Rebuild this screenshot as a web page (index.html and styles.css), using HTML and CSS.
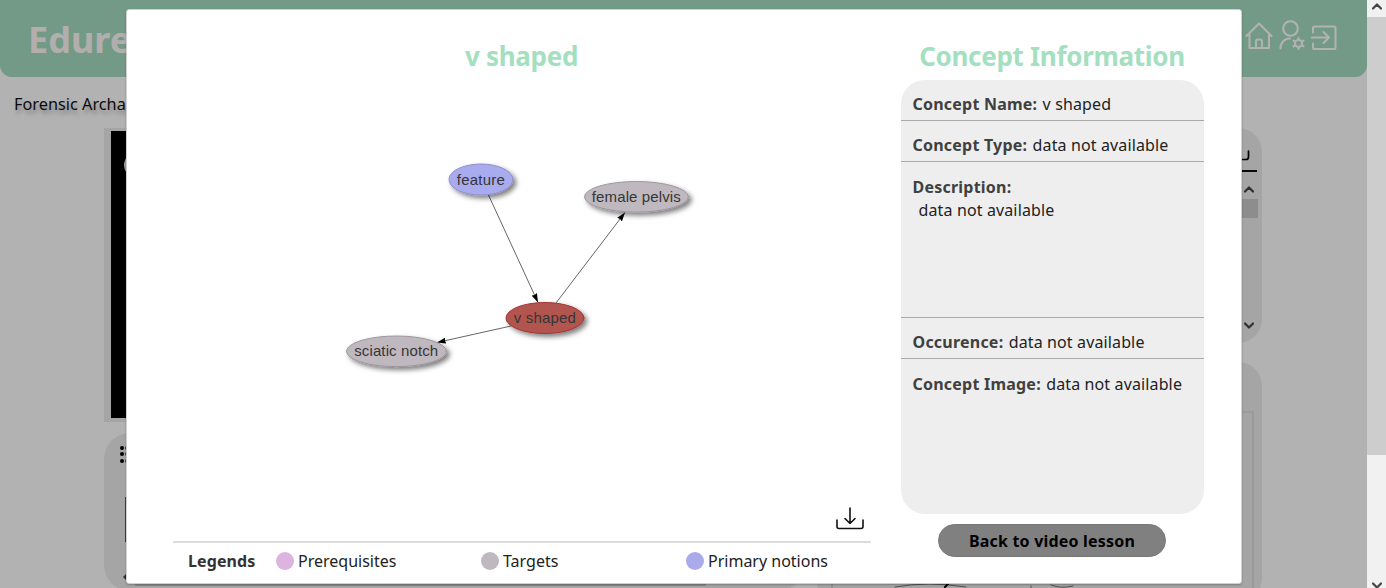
FILE: index.html
```html
<!DOCTYPE html>
<html lang="en">
<head>
<meta charset="utf-8">
<title>Edurell</title>
<link rel="stylesheet" href="styles.css">
</head>
<body>
<div class="screen">
  <div class="page">
    <header class="topbar">
      <div class="brand">Edure</div>
      <nav class="nav-icons">
        <svg width="28" height="32" viewBox="0 0 28 32"><path d="M1.500 17 14 4.500l12.500 12.500M4.500 15.500v13.500h19.500V15.500M11 29v-6.500a2 2 0 0 1 2-2h2a2 2 0 0 1 2 2v6.500"/></svg>
        <svg width="26" height="32" viewBox="0 0 26 32"><circle cx="11.500" cy="9.500" r="7.300"/><path d="M1.500 29.500c0-6 4-10 9.500-10"/><circle cx="19.500" cy="24.500" r="3.500"/><path d="M19.500 20.500v-1.500M19.500 28.500v1.500M16 22.500l-1.500-.8M23 22.500l1.500-.8M16 26.500l-1.500.8M23 26.500l1.500.8"/></svg>
        <svg width="26" height="32" viewBox="0 0 26 32"><path d="M2 13.500V9q0-1.500 1.500-1.500h19.500q1.500 0 1.500 1.500v19.500q0 1.500-1.500 1.500H3.500Q2 30 2 28.500V24.500M1 18.500h17M12.500 13l5.500 5.500-5.500 5.500"/></svg>
      </nav>
    </header>
    <div class="lesson">Forensic Archa</div>
    <main class="columns">
      <div class="col-left">
        <div class="video"><div class="player"><span class="knob"></span></div></div>
        <div class="card fragments">
          <div class="dots"><i></i><i></i><i></i></div>
          <div class="thumb"></div>
          <div class="track"><b></b><span class="rail"></span></div>
        </div>
      </div>
      <div class="col-right">
        <div class="card transcript">
          <svg class="dl" width="16" height="14" viewBox="0 0 16 14"><path d="M1 9.500h11q2.500 0 2.500-2.500V1"/></svg>
          <div class="rule"></div>
          <div class="scroller">
            <svg width="10" height="8" viewBox="0 0 10 8"><path d="M1 6.500 5 2.500l4 4"/></svg>
            <span class="grip"></span>
            <svg class="down" width="10" height="8" viewBox="0 0 10 8"><path d="M1 1.500l4 4 4-4"/></svg>
          </div>
        </div>
        <div class="card mapcard"><div class="map">
          <svg width="420" height="176" viewBox="0 0 420 176"><path d="M62 174Q95 168 133 174M198 173V176M218 172q10 4 22 1"/><path class="speck" d="M112 174l3-3"/></svg>
        </div></div>
      </div>
    </main>
  </div>
  <aside class="scrollbar">
    <div class="sb-btn"><svg width="10" height="8" viewBox="0 0 10 8"><path d="M1 6.500 5 2.500l4 4"/></svg></div>
    <div class="sb-thumb"></div>
    <div class="sb-end"><svg width="10" height="8" viewBox="0 0 10 8"><path d="M1 1.500l4 4 4-4"/></svg></div>
  </aside>
  <div class="overlay">
    <section class="modal">
      <div class="graph-side">
        <h1 class="title">v shaped</h1>
        <svg class="graph" width="697" height="420" viewBox="173 80 697 420">
          <defs>
            <filter id="shadow" x="-20%" y="-30%" width="150%" height="180%"><feDropShadow dx="3" dy="3" stdDeviation="2.800" flood-color="#000" flood-opacity=".5"/></filter>
            <marker id="arrow" viewBox="0 0 9 6" refX="9" refY="3" markerWidth="9" markerHeight="6" markerUnits="userSpaceOnUse" orient="auto"><path d="M0 0 9 3 0 6 .800 3z"/></marker>
          </defs>
          <g class="edges">
            <path d="M488 194 538 302.500"/><path d="M556 303 625 212.500"/><path d="M511 326 437 342.500"/>
          </g>
          <g class="nodes">
            <ellipse class="primary" cx="481" cy="179.500" rx="32" ry="15.500"/>
            <ellipse class="target" cx="636.500" cy="196.800" rx="52" ry="15.300"/>
            <ellipse class="main" cx="545" cy="318" rx="39" ry="15.500"/>
            <ellipse class="target" cx="396.500" cy="351.300" rx="50" ry="15.300"/>
          </g>
          <g class="labels">
            <text x="480.800" y="184.500" textLength="48">feature</text>
            <text x="636.300" y="202" textLength="89">female pelvis</text>
            <text x="544.800" y="323" textLength="62">v shaped</text>
            <text x="396.200" y="356.300" textLength="84">sciatic notch</text>
          </g>
        </svg>
        <div class="tools"><svg width="28" height="24" viewBox="0 0 28 24"><path d="M1 13v6.500q0 2 2 2h22q2 0 2-2V13M14 1v15.500M9 11.500l5 5 5-5"/></svg></div>
        <div class="legend">
          <strong>Legends</strong>
          <span class="item"><i class="dot pre"></i>Prerequisites</span>
          <span class="item"><i class="dot tar"></i>Targets</span>
          <span class="item"><i class="dot pri"></i>Primary notions</span>
        </div>
      </div>
      <div class="info-side">
        <h1 class="title info-title">Concept Information</h1>
        <div class="info">
          <div class="row name"><b>Concept Name:</b> <span>v shaped</span></div>
          <div class="row type"><b>Concept Type:</b> <span>data not available</span></div>
          <div class="row desc"><b>Description:</b><p>data not available</p></div>
          <div class="row occ"><b>Occurence:</b> <span>data not available</span></div>
          <div class="row img"><b>Concept Image:</b> <span>data not available</span></div>
        </div>
        <button class="back">Back to video lesson</button>
      </div>
    </section>
  </div>
</div>
</body>
</html>
```

FILE: styles.css
```css
* { box-sizing: border-box; }
body { margin: 0; font-family: "Noto Sans", "Open Sans", sans-serif; color: #222; overflow: hidden; }
svg { display: block; fill: none; stroke-linecap: round; stroke-linejoin: round; }
.screen { position: relative; display: flex; width: 1386px; height: 588px; overflow: hidden; background: #fff; }
.page { width: 1367px; height: 588px; overflow: hidden; }
.topbar { height: 77px; padding: 0 30px 0 28px; display: flex; justify-content: space-between; background: #a4ddc1; border-radius: 0 0 12px 12px; }
.brand { font-size: 36px; line-height: 80px; font-weight: 700; color: #fffafa; }
.nav-icons { display: flex; gap: 6px; padding-top: 19px; stroke: #fff; stroke-width: 2.1; }
.lesson { height: 51px; padding: 15px 0 0 14px; font-size: 16.3px; line-height: 24px; color: #111; text-shadow: 2px 4px 4px rgba(0,0,0,.3); white-space: nowrap; }
.columns { display: flex; justify-content: space-between; width: 1158px; margin-left: 104px; }
.col-left { width: 700px; }
.col-right { width: 446px; }
.video { height: 294px; padding: 3px 7px; background: #ececec; }
.player { height: 287px; background: #000; padding: 22px 0 0 13px; }
.knob { display: block; width: 24px; height: 24px; border-radius: 50%; background: #ddd; }
.card { background: #ececec; }
.fragments { height: 158px; margin-top: 11px; border-radius: 26px; padding: 13px 16px 0; }
.dots { display: grid; gap: 2.400px; width: 12px; }
.dots i { display: block; width: 4px; height: 4px; border-radius: 50%; background: #000; box-shadow: 5px 0 #555; }
.thumb { margin: 34px 0 0 5px; width: 100px; height: 45px; border-left: 2px solid #555; }
.track { display: flex; align-items: center; gap: 8px; margin-top: 27px; padding-left: 3px; }
.track b { border: 4px solid transparent; border-right-color: #444; border-left: 0; }
.rail { width: 571px; height: 17px; background: #c5c5c5; }
.transcript { height: 215px; border-radius: 24px; padding-top: 22px; display: flex; flex-direction: column; align-items: flex-end; }
.dl { stroke: #000; stroke-width: 1.7; margin-right: 12px; }
.rule { width: 430px; height: 2px; margin: 6px 5px 0 0; background: #111; }
.scroller { display: flex; flex-direction: column; align-items: flex-end; padding: 13px 4px 0 0; stroke: #444; stroke-width: 2.2; height: 158px; }
.scroller svg { margin-right: 4px; }
.grip { width: 18px; height: 19px; margin-top: 6px; background: #cbcbcb; }
.down { margin-top: 104px; }
.mapcard { height: 240px; margin-top: 19px; border-radius: 24px; padding: 49px 8px 0 15px; }
.map { height: 200px; border: 2px solid #dedede; border-left-color: #d5d5d5; }
.map svg { stroke: #777; }
.map .speck { stroke: #000; stroke-width: 2; }
.scrollbar { width: 19px; background: #cdcdcd; display: flex; flex-direction: column; }
.scrollbar svg { stroke: #444; stroke-width: 2.2; margin: 0 auto; }
.sb-btn { height: 17px; padding-top: 2px; background: #f1f1f1; }
.sb-thumb { height: 438px; }
.sb-end { height: 133px; padding-top: 127px; background: #f1f1f1; }
.overlay { position: absolute; top: 0; left: 0; width: 1367px; height: 588px; background: rgba(0,0,0,.3); padding: 9px 0 0 126px; }
.modal { width: 1116px; height: 575px; border-radius: 3px; background: #fff; border: 1px solid #d0d0d0; box-shadow: 0 1px 2px rgba(0,0,0,.25); display: flex; padding-left: 46px; }
.graph-side { width: 698px; }
.title { margin: 0; height: 70px; padding: 27px 1px 0 0; text-align: center; font-size: 26px; line-height: 38px; font-weight: 700; letter-spacing: -.3px; color: #a3dfc0; white-space: nowrap; }
.edges { stroke: #666; stroke-width: 1; }
.edges path { marker-end: url(#arrow); }
marker path { fill: #000; stroke: none; }
.nodes { filter: url(#shadow); }
.primary { fill: #a9abef; stroke: #8d8fcb; }
.target { fill: #bfb8bf; stroke: #9d969d; }
.main { fill: #b25450; stroke: #a33431; }
.labels { font: 15px "Liberation Sans", Arial, sans-serif; fill: #363636; text-anchor: middle; }
.tools { height: 41px; padding: 7px 7.500px 0 0; display: flex; justify-content: flex-end; stroke: #111; stroke-width: 1.6; }
.legend { display: flex; height: 40px; border-top: 2px solid #dcdcdc; padding-left: 15px; font-size: 16px; line-height: 37px; }
.legend strong { flex: none; width: 88px; height: 37px; color: #333; letter-spacing: .1px; }
.item { flex: none; display: flex; align-items: center; width: 205px; height: 36px; gap: 4px; white-space: nowrap; }
.dot { width: 18px; height: 18px; border-radius: 50%; }
.pre { background: #dcb4df; } .tar { background: #bfb8bf; } .pri { background: #a9abeb; }
.info-side { width: 303px; margin-left: 30px; display: flex; flex-direction: column; align-items: center; }
.info { width: 303px; height: 434px; border-radius: 24px; background: #eee; font-size: 16px; line-height: 22px; letter-spacing: .13px; color: #222; white-space: nowrap; }
.row { padding-left: 11.500px; border-bottom: 1px solid #aaa; }
.row b { color: #404040; letter-spacing: .22px; }
.row span { margin-left: 1px; }
.name { height: 41px; padding-top: 13px; }
.type { height: 41px; padding-top: 13px; }
.desc { height: 156px; padding-top: 14px; }
.desc p { margin: 1px 0 0 6px; }
.occ { height: 41px; padding-top: 13px; }
.img { padding-top: 14px; border: 0; }
.back { width: 228px; height: 33px; margin: 10px 1px 0 0; padding: 0; border: 1px solid #777; border-radius: 17px; background: #808080; font: 700 16px/30px "Noto Sans", "Open Sans", sans-serif; letter-spacing: .2px; color: #000; }
```
